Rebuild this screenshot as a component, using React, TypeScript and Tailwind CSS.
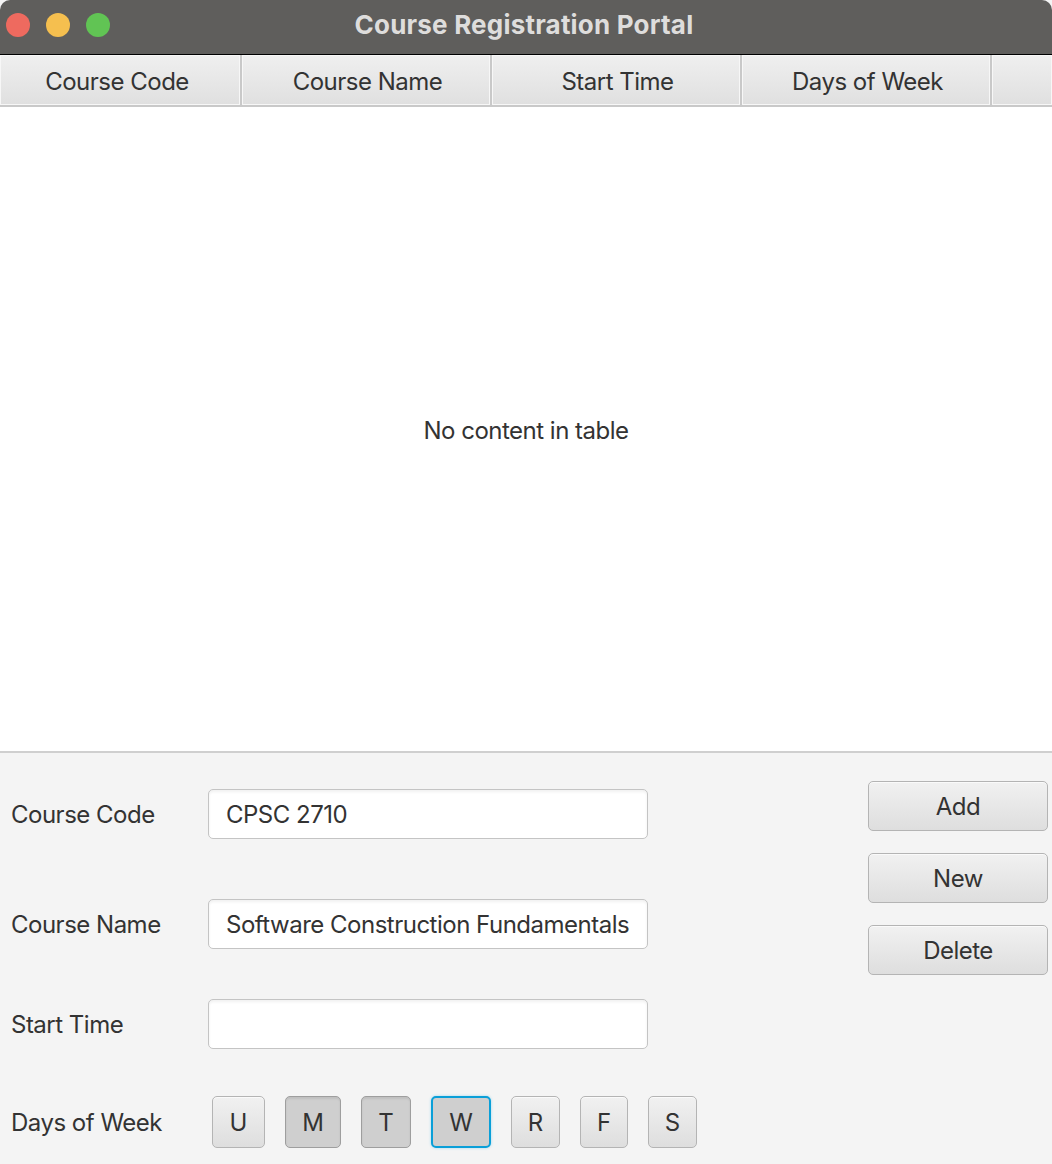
import React from "react";

const columns = ["Course Code", "Course Name", "Start Time", "Days of Week"];
const days = [
  { label: "U", selected: false, w: "w-[53px]" },
  { label: "M", selected: true, w: "w-[56px]" },
  { label: "T", selected: true, w: "w-[50px]" },
  { label: "W", selected: true, focused: true, w: "w-[60px]" },
  { label: "R", selected: false, w: "w-[49px]" },
  { label: "F", selected: false, w: "w-[48px]" },
  { label: "S", selected: false, w: "w-[49px]" },
];

function TitleBar() {
  return (
    <div className="relative flex h-[55px] items-center justify-center rounded-t-[10px] border-b border-black bg-[#5f5e5c]">
      <div className="absolute left-[6px] top-[13px] flex gap-[16px]">
        <span className="h-[24px] w-[24px] rounded-full bg-[#ee6a5f]" />
        <span className="h-[24px] w-[24px] rounded-full bg-[#f5bf4f]" />
        <span className="h-[24px] w-[24px] rounded-full bg-[#61c454]" />
      </div>
      <span className="pb-[5px] pr-[4px] text-[26px] font-bold tracking-[0.2px] text-[#dedddc]">
        Course Registration Portal
      </span>
    </div>
  );
}

function TableHeader() {
  return (
    <div className="flex h-[52px] border-b-2 border-[#c9c9c9] bg-[#c9c9c9]">
      {columns.map((c, i) => (
        <div
          key={c}
          className={`${i === 0 ? "w-[240px] pr-[6px]" : "w-[248px] pl-[3px]"} mr-[2px] flex items-center justify-center border border-[#f7f7f7] bg-gradient-to-b from-[#efefef] to-[#e0e0e0] pt-[4px] text-[24px] tracking-[-0.5px] text-[#333333]`}
        >
          {c}
        </div>
      ))}
      <div className="flex-1 border border-[#f7f7f7] bg-gradient-to-b from-[#efefef] to-[#e0e0e0]" />
    </div>
  );
}

function Field({ value }: { value?: string }) {
  return (
    <div className="flex h-[50px] w-[440px] items-center whitespace-nowrap rounded-[5px] border border-[#c4c4c4] bg-white px-[17px] pt-[2px] text-[24px] tracking-[-0.5px] text-[#333333] shadow-[inset_0_2px_3px_rgba(0,0,0,0.06)]">
      {value}
    </div>
  );
}

function Button({ label }: { label: string }) {
  return (
    <button className="flex h-[50px] w-[180px] items-center justify-center rounded-[5px] border border-[#b4b4b4] bg-gradient-to-b from-[#f1f1f1] to-[#dedede] pt-[2px] text-[24px] tracking-[-0.5px] text-[#333333] shadow-[inset_0_1px_0_#fafafa]">
      {label}
    </button>
  );
}

function Label({ text, w }: { text: string; w: string }) {
  return (
    <span className={`${w} whitespace-nowrap pt-[2px] text-[24px] tracking-[-0.5px] text-[#333333]`}>
      {text}
    </span>
  );
}

export default function App() {
  return (
    <div
      className="flex h-[1164px] w-[1052px] flex-col overflow-hidden bg-[#f4f4f4]"
      style={{ fontFamily: "Inter, 'Noto Sans', sans-serif" }}
    >
      <TitleBar />
      <TableHeader />
      <div className="flex h-[646px] items-center justify-center border-b-2 border-[#cfcfcf] bg-white pt-[4px] text-[24px] tracking-[-0.5px] text-[#333333]">
        No content in table
      </div>

      <div className="flex flex-1">
        <div className="flex flex-1 flex-col pl-[11px] pt-[36px]">
          <div className="flex h-[50px] items-center">
            <Label text="Course Code" w="w-[197px]" />
            <Field value="CPSC 2710" />
          </div>
          <div className="mt-[60px] flex h-[50px] items-center">
            <Label text="Course Name" w="w-[197px]" />
            <Field value="Software Construction Fundamentals" />
          </div>
          <div className="mt-[50px] flex h-[50px] items-center">
            <Label text="Start Time" w="w-[197px]" />
            <Field />
          </div>
          <div className="mt-[47px] flex h-[52px] items-center">
            <Label text="Days of Week" w="w-[201px]" />
            <div className="flex gap-[20px]">
              {days.map((d) => (
                <button
                  key={d.label}
                  className={`${d.w} flex h-[52px] items-center justify-center rounded-[5px] pt-[2px] text-[24px] text-[#333333] ${
                    d.focused
                      ? "border-2 border-[#0a9fd8] bg-[#cfcfcf] shadow-[0_0_3px_#9fd6ee]"
                      : d.selected
                        ? "border border-[#9e9e9e] bg-[#cfcfcf] shadow-[inset_0_2px_2px_rgba(0,0,0,0.08)]"
                        : "border border-[#b4b4b4] bg-gradient-to-b from-[#f1f1f1] to-[#dedede] shadow-[inset_0_1px_0_#fafafa]"
                  }`}
                >
                  {d.label}
                </button>
              ))}
            </div>
          </div>
        </div>
        <div className="flex flex-col gap-[22px] pr-[4px] pt-[28px]">
          <Button label="Add" />
          <Button label="New" />
          <Button label="Delete" />
        </div>
      </div>
    </div>
  );
}
